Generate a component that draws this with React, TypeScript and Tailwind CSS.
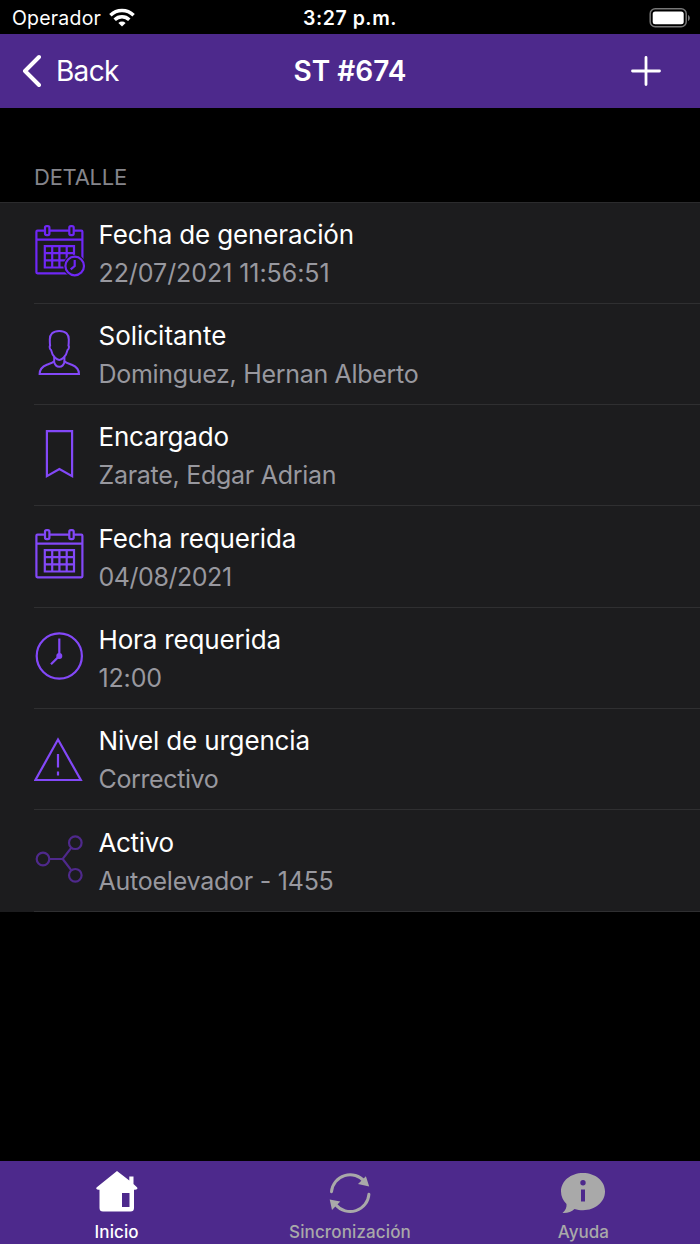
import React from 'react';

function CalendarBase() {
  return (
    <>
      <path d="M11 28.700H3.400a1 1 0 0 0-1 1v40.600a1 1 0 0 0 1 1h44a1 1 0 0 0 1-1V29.700a1 1 0 0 0-1-1h-7.600M15.400 28.700h20M2.400 37.700h46" />
      <rect x="11" y="24.100" width="4.400" height="9" rx="1.500" />
      <rect x="35.300" y="24.100" width="4.400" height="9" rx="1.500" />
      <path d="M10.800 44.100h29.200v21.400H10.800zM18.200 44.100v21.400M25.400 44.100v21.400M32.700 44.100v21.400M10.800 51.200h29.200M10.800 58.300h29.200" />
    </>
  );
}

const icons = {
  generated: (
    <>
      <CalendarBase />
      <circle cx="40.700" cy="64" r="11.300" fill="#1c1c1e" stroke="none" />
      <circle cx="40.700" cy="64" r="9.300" />
      <path d="M40.700 58v6l-4 3.300" />
    </>
  ),
  person: (
    <g strokeWidth="2">
      <path d="M25.300 27.900c-6.400 0-9.600 3.500-9.500 8.700 0 2.500.1 4.300.3 6-.9.700-.4 3.800 1 4.600.6 3.400 2.200 5.800 4 7.600 1.400 1.400 2.600 2.100 4.200 2.100s2.800-.7 4.200-2.100c1.800-1.800 3.400-4.200 4-7.600 1.400-.8 1.900-3.900 1-4.600.2-1.700.3-3.500.3-6 .1-5.200-3.100-8.700-9.500-8.700z" />
      <path d="M20.200 54v4.200c-1.600 1.700-4.600 2.400-7.400 3.500-4.800 1.900-7.200 4.300-7.200 9.300h39.400c0-5-2.400-7.400-7.200-9.300-2.800-1.100-5.800-1.800-7.400-3.500V54" />
      <path d="M19.900 58.200c.8 3.600 2.700 5.500 5.400 5.500s4.600-1.900 5.400-5.500" />
    </g>
  ),
  bookmark: <path d="M12.900 26.200h25.200v45L25.400 64l-12.500 7.200z" />,
  calendar: <CalendarBase />,
  clock: (
    <>
      <circle cx="25.300" cy="49" r="22.600" />
      <path d="M25.300 31.500v17.500l-8.300 8.300" />
      <circle cx="25.300" cy="49" r="3" fill="currentColor" stroke="none" />
    </>
  ),
  warning: <path d="M24 30.500 1.400 71h45.400zM24 45v13.500M24 62.500v4" />,
  nodes: (
    <>
      <circle cx="9" cy="49" r="6.300" />
      <circle cx="41.300" cy="32.700" r="6.300" />
      <circle cx="41.300" cy="65.300" r="6.300" />
      <path d="M15.300 49h13.400l8.700-11.400M28.700 49l8.700 11.400" />
    </>
  ),
};

const rows = [
  { icon: icons.generated, color: 'text-[#6f27f5]', title: 'Fecha de generación', value: '22/07/2021 11:56:51', ts: 'tracking-[-0.14px]', vs: 'tracking-[-0.06px]' },
  { icon: icons.person, color: 'text-[#8348f8]', title: 'Solicitante', value: 'Dominguez, Hernan Alberto', ts: 'tracking-[-0.02px]', vs: 'tracking-[-0.31px]' },
  { icon: icons.bookmark, color: 'text-[#8348f8]', title: 'Encargado', value: 'Zarate, Edgar Adrian', ts: 'tracking-[-0.2px]', vs: 'tracking-[-0.28px]' },
  { icon: icons.calendar, color: 'text-[#8348f8]', title: 'Fecha requerida', value: '04/08/2021', ts: 'tracking-[-0.12px]', vs: 'tracking-[-0.45px]' },
  { icon: icons.clock, color: 'text-[#8348f8]', title: 'Hora requerida', value: '12:00', ts: 'tracking-[-0.15px]', vs: 'tracking-[-0.15px]' },
  { icon: icons.warning, color: 'text-[#8348f8]', title: 'Nivel de urgencia', value: 'Correctivo', ts: 'tracking-[-0.16px]', vs: 'tracking-[-0.38px]' },
  { icon: icons.nodes, color: 'text-[#4f298c]', title: 'Activo', value: 'Autoelevador - 1455', ts: 'tracking-[-0.35px]', vs: 'tracking-[-0.24px]' },
];

function StatusBar() {
  return (
    <div className="grid h-[34px] grid-cols-3 items-center px-[11px] text-[19.5px] leading-[34px]">
      <div className="flex items-center gap-2 pl-px pt-px">
        <span className="tracking-[0.2px]">Operador</span>
        <svg className="-mt-0.5" width="26" height="19" viewBox="0 0 26 19" fill="none" stroke="white" strokeWidth="3.400">
          <path d="M1.400 7.200a16.500 16.500 0 0 1 23.200 0M5.700 11.700a10.400 10.400 0 0 1 14.600 0" />
          <path d="M13 18.500 9.400 14.900a5.200 5.200 0 0 1 7.200 0z" fill="white" stroke="none" />
        </svg>
      </div>
      <span className="pt-px text-center font-semibold tracking-[0.55px]">3:27 p.m.</span>
      <svg className="-mr-0.5 justify-self-end" width="42" height="20" viewBox="0 0 42 20">
        <rect x="1.200" y="0.800" width="36" height="18" rx="5" fill="none" stroke="#777" strokeWidth="1.500" />
        <rect x="3.700" y="3.500" width="31" height="12.800" rx="2.500" fill="white" />
        <path d="M39 7c2.400 1.200 2.400 4.800 0 6z" fill="#777" />
      </svg>
    </div>
  );
}

export default function App() {
  return (
    <div className="flex h-[1244px] w-[700px] flex-col overflow-hidden bg-black font-['Inter',sans-serif] text-white">
      <StatusBar />

      <header className="grid h-[74px] grid-cols-3 items-center bg-[#4d298c] pl-[21px] pr-[39px] text-[28px]">
        <button className="flex items-center gap-[15px]">
          <svg width="20" height="34" viewBox="0 0 20 34" fill="none" stroke="white" strokeWidth="4" strokeLinecap="round" strokeLinejoin="round">
            <path d="M18 3 4 17l14 14" />
          </svg>
          <span className="tracking-[-0.7px]">Back</span>
        </button>
        <h1 className="pl-[18px] text-center font-semibold">ST #674</h1>
        <button className="justify-self-end">
          <svg width="30" height="30" viewBox="0 0 30 30" stroke="white" strokeWidth="2.800" strokeLinecap="round">
            <path d="M15 1.500v27M1.500 15h27" />
          </svg>
        </button>
      </header>

      <main className="flex-1">
        <h2 className="h-[93.500px] pl-[34px] pt-[54px] text-[22px] leading-[30px] tracking-[-0.25px] text-[#85858b]">DETALLE</h2>
        <ul className="border-t border-[#2b2b2d] bg-[#1c1c1e]">
          {rows.map((row) => (
            <li key={row.title} className="flex h-[101.300px] pl-[34px]">
              <div className="flex flex-1 border-b border-[#2f2f31]">
                <svg
                  className={`${row.color} -mt-[0.400px] w-[64.500px] shrink-0`}
                  height="100"
                  viewBox="0 0 64.500 100"
                  fill="none"
                  stroke="currentColor"
                  strokeWidth="2.200"
                >
                  {row.icon}
                </svg>
                <div className="pt-[13.400px]">
                  <p className={`text-[26px] leading-[38px] whitespace-nowrap ${row.ts}`}>{row.title}</p>
                  <p className={`text-[25px] leading-[38px] whitespace-nowrap text-[#98989f] ${row.vs}`}>{row.value}</p>
                </div>
              </div>
            </li>
          ))}
        </ul>
      </main>

      <nav className="grid h-[83px] grid-cols-3 bg-[#4d298c] text-[17px] font-medium text-[#a9a9a9]">
        <a className="flex flex-col items-center pt-2 text-white">
          <svg width="44" height="50" viewBox="0 0 44 50" fill="currentColor">
            <path fillRule="evenodd" d="M22 2 1.500 18.500c-.8 1.500.3 2.500 3 2.200V39a3.500 3.500 0 0 0 3.500 3.500h27.500A3.500 3.500 0 0 0 39 39V20.700c2.800.3 4-.8 3.200-2.200L38.500 15V7.500h-4.200v4zM27 24h7.500v14H27z" />
          </svg>
          <span className="pt-px leading-[24px] tracking-[0.1px]">Inicio</span>
        </a>
        <a className="flex flex-col items-center pt-2">
          <svg width="44" height="50" viewBox="0 0 44 50" fill="none" stroke="currentColor" strokeWidth="3" strokeLinecap="round">
            <path d="M3.500 22.700A18.700 18.700 0 0 1 36.500 12.500M40.900 25.300A18.700 18.700 0 0 1 8 36" />
            <path d="m37.900 7.300 3.300 10.200-11.200-2.400zM1.700 30.500l10.600 2-8.300 8.600z" fill="currentColor" stroke="none" />
          </svg>
          <span className="pt-px leading-[24px] tracking-[0.13px]">Sincronización</span>
        </a>
        <a className="flex flex-col items-center pt-2">
          <svg width="44" height="50" viewBox="0 0 44 50" fill="currentColor">
            <path d="M22 4C9.800 4 0 12 0 22.500c0 5 2 9 5.500 12.500.5 3-1 6.500-4 9 5 .3 9-1 12-4 2.700.9 5.500 1.200 8.500 1.200 12.200 0 22-8 22-18.700S34.200 4 22 4z" />
            <circle cx="22" cy="13.800" r="2.700" fill="#4d298c" />
            <path d="M20 20.500h4v12h-4z" fill="#4d298c" />
          </svg>
          <span className="pt-px leading-[24px]">Ayuda</span>
        </a>
      </nav>
    </div>
  );
}
